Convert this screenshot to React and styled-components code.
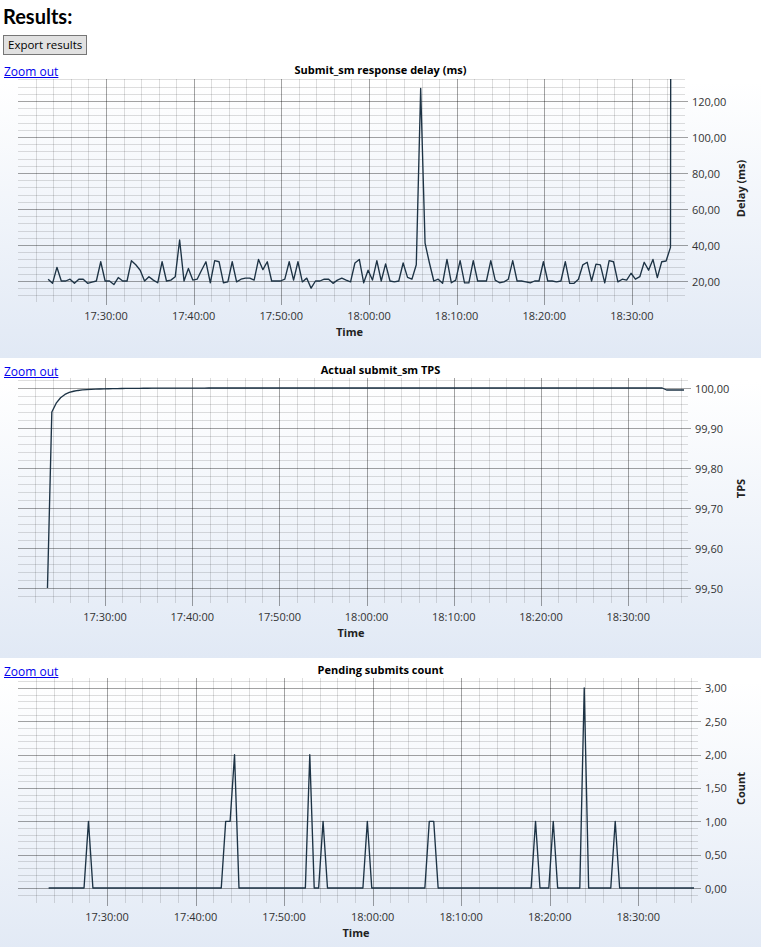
import React from 'react';
import styled, { createGlobalStyle } from 'styled-components';

const GlobalStyle = createGlobalStyle`
  html, body { margin: 0; padding: 0; background: #ffffff; overflow: hidden; }
  body { font-family: "Open Sans", "Noto Sans", sans-serif; color: #000; }
`;

const Page = styled.main`
  display: flex;
  flex-direction: column;
`;

const Intro = styled.header`
  display: flex;
  flex-direction: column;
  align-items: flex-start;
  gap: 7px;
  padding: 0 3px 3px;
`;

const Heading = styled.h1`
  margin: 4px 0 0;
  font: 700 20px/24px Lato, "Open Sans", sans-serif;
  color: #000;
`;

const ExportButton = styled.button`
  height: 20px;
  padding: 0 4px;
  font: 400 11.5px/18px "Open Sans", sans-serif;
  color: #000;
  background: #e1e1e1;
  border: 1px solid #767676;
  border-radius: 0;
`;

const Charts = styled.section`
  display: flex;
  flex-direction: column;
`;

const Panel = styled.article`
  height: 300px;
  flex: none;
  display: flex;
  flex-direction: column;
  background: linear-gradient(to bottom, #ffffff 8%, #e1e9f5 100%);
`;

const PanelHeader = styled.div`
  height: 20px;
  box-sizing: border-box;
  padding: 0 4px;
  display: grid;
  grid-template-columns: 1fr auto 1fr;
  align-items: end;
`;

const ZoomLink = styled.a`
  justify-self: start;
  font: 400 12px/12px "Open Sans", sans-serif;
  color: #0000ee;
  text-decoration: underline;
  cursor: pointer;
`;

const Title = styled.h2`
  margin: 0 0 1px;
  font: 700 11px/14px "Open Sans", sans-serif;
  color: #000;
`;

const ChartSvg = styled.svg`
  display: block;
  width: 761px;
  height: 280px;
  flex: none;
`;

const GridLine = styled.line`
  stroke: ${(p) => (p.$major ? 'rgba(0,0,0,0.36)' : 'rgba(0,0,0,0.13)')};
  stroke-width: 1;
  shape-rendering: crispEdges;
`;

const SeriesPath = styled.path`
  fill: none;
  stroke: #1d3345;
  stroke-width: 1.35;
  stroke-linejoin: round;
`;

const TickLabel = styled.text`
  font: 400 11px "Open Sans", sans-serif;
  fill: #333333;
`;

const AxisTitle = styled.text`
  font: 700 11px "Open Sans", sans-serif;
  fill: #222222;
`;

const delayValues = [
  21, 18.7, 27.6, 20, 20, 21, 18.7, 21, 21, 18.7, 19.4, 20, 30.7, 20, 20, 18, 21.9, 20, 20, 31.3,
  29, 26, 20, 22.4, 20.5, 19, 30.7, 20, 20.5, 22.4, 42.8, 20, 27, 20.5, 21, 26, 30.7, 19, 31.3, 30.7,
  19, 19.5, 30.7, 19.5, 21, 21.6, 21.6, 20.5, 32, 26.3, 30.7, 20, 20, 20, 21, 30.7, 20.5, 30.7, 19.5, 21.6,
  16, 20, 20, 21, 21, 18.7, 20.5, 21.6, 20.5, 19.5, 30, 32, 19, 26, 20.5, 31.3, 20, 29.5, 20, 19.5,
  20, 30, 22, 21, 29, 127, 41, 30, 20, 21, 18.7, 32, 19, 20.5, 31.3, 19, 19, 31.3, 20, 20,
  20, 31.3, 20.5, 19, 19.5, 21, 31.3, 20, 20, 19.5, 19, 20, 20, 30.7, 20, 20, 19.5, 20, 30.7, 18.7,
  18.7, 21, 29, 30.4, 20, 29.4, 29, 19, 31.3, 30.7, 19.5, 21, 20.5, 24.3, 21, 22.4, 30.4, 26, 32, 21.9,
  30.7, 31.1, 38.7, 2000,
];

const series = (values) => values.map((v, i) => [-6.6 + i * 0.5, v]);

const tpsValues = Array.from({ length: 147 }, (_, i) => {
  if (i === 0) return 99.5;
  if (i === 1) return 99.94;
  if (i >= 142) return 99.995;
  return 100 - 0.03 * Math.exp(-(i - 2) / 1.8) - 0.008 * Math.exp(-(i - 2) / 8);
});

const pendingSpikes = { 9: 1, 40: 1, 41: 1, 42: 2, 59: 2, 62: 1, 72: 1, 86: 1, 87: 1, 110: 1, 114: 1, 121: 3, 128: 1 };
const pendingValues = Array.from({ length: 147 }, (_, i) => pendingSpikes[i] || 0);

const chartDefs = [
  {
    id: 'delay',
    title: 'Submit_sm response delay (ms)',
    yTitle: 'Delay (ms)',
    left: 18, right: 681, top: 21, bottom: 240,
    tMin: -10.04, tMax: 65.6,
    vRef: 20, yRef: 223, ppu: 1.8,
    minorFrom: 12, minorTo: 132, minorStep: 4,
    majorFrom: 20, majorTo: 120, majorStep: 20,
    data: series(delayValues),
  },
  {
    id: 'tps',
    title: 'Actual submit_sm TPS',
    yTitle: 'TPS',
    left: 18, right: 684, top: 20, bottom: 241,
    tMin: -9.98, tMax: 66.4,
    vRef: 100, yRef: 30, ppu: 400,
    minorFrom: 99.48, minorTo: 100.02, minorStep: 0.02,
    majorFrom: 99.5, majorTo: 100, majorStep: 0.1,
    data: series(tpsValues),
  },
  {
    id: 'pending',
    title: 'Pending submits count',
    yTitle: 'Count',
    left: 18, right: 694, top: 20, bottom: 241,
    tMin: -10.06, tMax: 66.3,
    vRef: 0, yRef: 230, ppu: 66.667,
    minorFrom: -0.1, minorTo: 3.1, minorStep: 0.1,
    majorFrom: 0, majorTo: 3, majorStep: 0.5,
    data: series(pendingValues),
  },
];

const fmtTime = (t) => {
  const total = 17 * 60 + 30 + t;
  const h = Math.floor(total / 60);
  const m = total % 60;
  return `${h}:${String(m).padStart(2, '0')}:00`;
};

const fmtValue = (v) => v.toFixed(2).replace('.', ',');

function Chart({ def }) {
  const { left, right, top, bottom, tMin, tMax, vRef, yRef, ppu } = def;
  const xOf = (t) => left + ((t - tMin) * (right - left)) / (tMax - tMin);
  const yOf = (v) => yRef - (v - vRef) * ppu;
  const crisp = (p) => Math.round(p) + 0.5;

  const timeTicks = [];
  for (let t = -8; xOf(t) <= right - 1; t += 2) timeTicks.push(t);

  const valueTicks = [];
  for (let k = 0; ; k++) {
    const v = def.minorFrom + k * def.minorStep;
    if (v > def.minorTo + 1e-9) break;
    valueTicks.push(v);
  }
  const isMajorV = (v) => {
    const q = (v - def.majorFrom) / def.majorStep;
    return Math.abs(q - Math.round(q)) < 1e-6 && v >= def.majorFrom - 1e-9 && v <= def.majorTo + 1e-9;
  };

  const path = def.data
    .map(([t, v], i) => `${i ? 'L' : 'M'}${xOf(t).toFixed(2)},${yOf(v).toFixed(2)}`)
    .join(' ');
  const clipId = `clip-${def.id}`;

  return (
    <ChartSvg viewBox="0 20 761 280">
      <defs>
        <clipPath id={clipId}>
          <rect x={left} y={top} width={right - left} height={bottom - top} />
        </clipPath>
      </defs>
      {valueTicks.map((v) => {
        const major = isMajorV(v);
        const y = crisp(yOf(v));
        return (
          <GridLine key={`h${v}`} $major={major} x1={left} x2={right + (major ? 7 : 4)} y1={y} y2={y} />
        );
      })}
      {timeTicks.map((t) => {
        const major = t % 10 === 0;
        const x = crisp(xOf(t));
        return (
          <GridLine key={`v${t}`} $major={major} x1={x} x2={x} y1={top} y2={bottom + (major ? 7 : 4)} />
        );
      })}
      <SeriesPath d={path} clipPath={`url(#${clipId})`} />
      {valueTicks.filter(isMajorV).map((v) => (
        <TickLabel key={`l${v}`} x={right + 11} y={yOf(v)} dominantBaseline="central">
          {fmtValue(v)}
        </TickLabel>
      ))}
      {timeTicks.filter((t) => t % 10 === 0).map((t) => (
        <TickLabel key={`t${t}`} x={xOf(t)} y={bottom + 17} textAnchor="middle" dominantBaseline="central">
          {fmtTime(t)}
        </TickLabel>
      ))}
      <AxisTitle x={(left + right) / 2} y={bottom + 33} textAnchor="middle" dominantBaseline="central">
        Time
      </AxisTitle>
      <AxisTitle
        x={740}
        y={(top + bottom) / 2}
        textAnchor="middle"
        dominantBaseline="central"
        transform={`rotate(-90 740 ${(top + bottom) / 2})`}
      >
        {def.yTitle}
      </AxisTitle>
    </ChartSvg>
  );
}

export default function App() {
  return (
    <Page>
      <GlobalStyle />
      <Intro>
        <Heading>Results:</Heading>
        <ExportButton type="button">Export results</ExportButton>
      </Intro>
      <Charts>
        {chartDefs.map((def) => (
          <Panel key={def.id}>
            <PanelHeader>
              <ZoomLink href="#">Zoom out</ZoomLink>
              <Title>{def.title}</Title>
            </PanelHeader>
            <Chart def={def} />
          </Panel>
        ))}
      </Charts>
    </Page>
  );
}
